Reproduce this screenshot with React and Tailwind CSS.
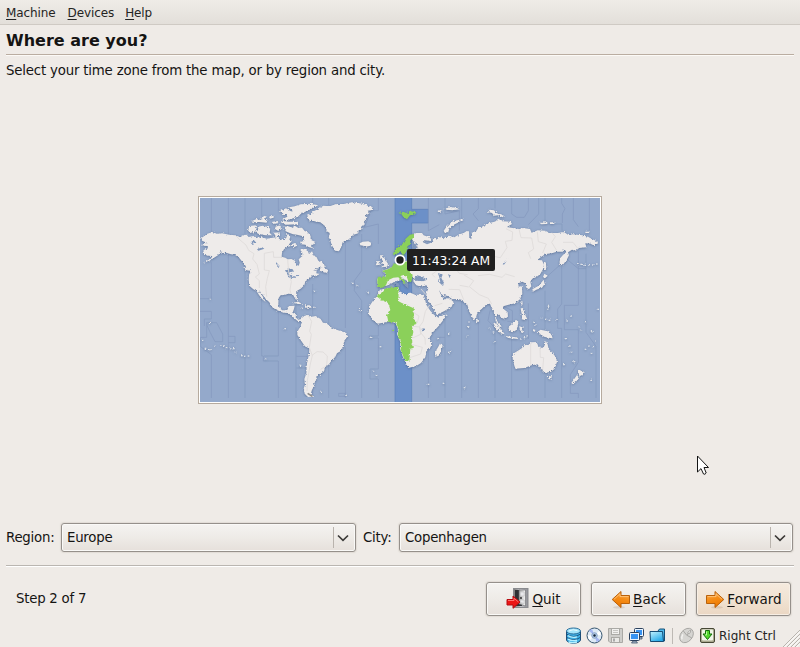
import React from "react";

/* Map units are thirds of a pixel: the 1200x612 view box is drawn at 400x204. */
const LAND = [
  // North America
  "M18 140 L16 132 L28 124 L34 119 L50 114 L62 119 L78 118 L100 122 L118 124 L130 128 L142 123 L152 122 L158 129 L172 126 L185 131 L198 130 L212 134 L230 131 L245 129 L250 135 L262 139 L270 132 L275 124 L283 128 L280 137 L288 140 L280 150 L284 156 L272 160 L264 166 L258 176 L257 188 L268 191 L275 196 L286 195 L297 200 L301 212 L308 215 L311 206 L308 196 L318 187 L319 176 L313 168 L326 165 L336 172 L339 180 L348 172 L354 184 L362 190 L367 200 L378 205 L386 214 L383 221 L369 221 L352 229 L362 230 L361 238 L372 240 L355 248 L352 242 L340 254 L328 262 L325 274 L314 284 L301 292 L300 303 L307 315 L304 323 L297 313 L290 301 L277 299 L266 303 L254 304 L248 312 L247 331 L252 344 L262 350 L275 345 L281 336 L296 335 L293 348 L289 356 L300 361 L299 370 L307 377 L318 374 L319 381 L305 381 L294 372 L287 364 L275 357 L262 356 L240 347 L227 338 L220 325 L207 313 L198 300 L188 287 L201 309 L209 324 L198 315 L189 303 L181 290 L172 286 L160 275 L158 260 L159 242 L164 232 L151 225 L149 216 L140 205 L128 190 L116 182 L105 181 L90 176 L77 177 L75 170 L66 184 L52 193 L38 202 L20 206 L45 194 L49 186 L34 185 L20 178 L23 168 L36 163 L34 156 L19 155 L22 147 L35 148 Z",
  // Arctic islands
  "M160 96 L179 94 L182 104 L176 113 L162 117 L156 109 Z",
  "M185 99 L198 95 L214 98 L223 104 L221 116 L228 124 L208 124 L188 120 L176 113 L187 109 Z",
  "M166 82 L183 74 L187 78 L205 74 L216 81 L211 86 L190 84 L177 85 Z",
  "M193 72 L207 65 L210 71 L200 75 Z M219 68 L233 65 L233 71 L222 74 Z M229 83 L247 81 L246 88 L228 90 Z M252 51 L270 43 L287 53 L275 61 L262 63 Z",
  "M254 85 L258 80 L278 83 L306 83 L306 91 L270 92 Z M258 76 L274 68 L270 58 L290 51 L279 40 L296 37 L314 31 L345 29 L367 34 L346 43 L336 52 L317 57 L306 68 L287 74 L273 79 Z",
  "M264 98 L281 97 L291 102 L294 94 L306 101 L318 101 L326 111 L335 115 L344 126 L344 137 L359 144 L356 150 L345 153 L351 163 L337 159 L328 152 L315 151 L312 143 L325 141 L321 127 L303 122 L291 121 L281 117 L269 112 Z",
  "M238 98 L252 94 L255 103 L247 111 L238 106 Z M233 116 L251 115 L252 123 L240 128 Z M270 120 L279 123 L272 128 Z M284 152 L298 146 L303 155 L294 160 Z",
  "M374 222 L389 215 L388 223 L397 229 L393 237 L381 233 L371 232 Z M140 217 L152 223 L160 231 L148 227 Z",
  // Caribbean
  "M290 326 L307 323 L324 333 L309 331 Z M326 334 L341 334 L347 341 L330 341 Z M314 341 h7 v3 h-7 Z M351 338 h5 v3 h-5 Z M40 314 h5 v3 h-5 Z",
  // Greenland
  "M331 66 L345 60 L350 53 L362 47 L382 35 L401 37 L420 30 L443 30 L468 25 L501 29 L516 35 L532 41 L526 49 L515 50 L521 57 L508 66 L513 74 L503 83 L507 91 L496 97 L500 104 L488 109 L487 118 L471 123 L465 132 L450 139 L440 145 L436 158 L429 172 L417 170 L407 153 L403 139 L398 130 L401 117 L391 111 L393 101 L384 94 L373 85 L353 82 L339 79 Z",
  // Iceland, British isles
  "M491 148 L500 143 L517 142 L528 148 L523 155 L510 158 L501 155 L493 154 Z",
  "M552 184 L562 184 L560 190 L567 194 L573 205 L577 211 L573 218 L555 220 L564 212 L557 207 L561 201 L553 193 Z M544 201 L553 202 L550 213 L539 214 Z",
  // Eurasia
  "M643 128 L660 117 L678 117 L683 124 L706 132 L705 141 L685 139 L680 144 L693 151 L703 147 L712 142 L708 135 L716 132 L725 137 L726 129 L748 132 L758 125 L775 130 L790 121 L803 117 L812 111 L819 112 L820 131 L826 135 L827 119 L832 112 L839 114 L848 99 L858 98 L877 88 L895 83 L912 76 L922 82 L944 83 L948 90 L933 99 L950 102 L970 105 L981 102 L1002 105 L1007 116 L1025 109 L1048 110 L1062 117 L1085 117 L1104 114 L1117 123 L1130 121 L1160 124 L1176 128 L1188 135 L1206 143 L1204 152 L1191 153 L1183 149 L1168 148 L1171 160 L1149 162 L1140 170 L1128 167 L1116 175 L1119 184 L1113 196 L1103 210 L1095 216 L1090 206 L1093 192 L1100 184 L1112 173 L1104 166 L1098 173 L1082 173 L1068 178 L1049 180 L1034 190 L1024 198 L1038 199 L1044 212 L1041 226 L1033 240 L1022 249 L1009 254 L1003 263 L1006 277 L999 286 L991 281 L988 268 L979 263 L967 268 L968 278 L978 277 L979 300 L972 316 L958 328 L938 332 L922 337 L923 345 L935 355 L936 368 L922 374 L914 369 L904 360 L900 370 L904 382 L913 391 L917 400 L909 397 L899 382 L896 360 L888 345 L882 329 L872 331 L851 350 L843 360 L840 371 L832 376 L821 355 L813 330 L805 327 L799 318 L785 315 L769 316 L755 306 L738 302 L728 287 L737 306 L744 317 L759 311 L773 324 L767 338 L744 352 L722 362 L716 350 L703 331 L693 314 L690 302 L697 282 L691 274 L675 278 L661 274 L651 260 L655 250 L642 247 L637 264 L628 257 L604 260 L572 275 L545 279 L543 256 L548 250 L569 248 L566 238 L558 231 L590 220 L606 208 L632 200 L651 185 L653 172 L661 162 L658 150 Z",
  "M743 110 L753 96 L770 82 L797 76 L802 79 L776 91 L760 104 L757 114 L746 116 Z",
  "M876 54 L881 47 L894 49 L901 57 L910 60 L924 65 L920 70 L906 64 L895 65 L888 57 Z M1030 86 h12 v-5 l12 4 v5 l-18 1 Z M1062 85 h13 v5 h-13 Z M1168 113 h12 v4 h-12 Z M724 51 l11 -3 l5 3 l-12 4 Z M745 44 l19 -5 l17 2 l10 5 l-20 3 l-13 -1 Z",
  "M1044 200 L1050 207 L1051 224 L1047 232 L1043 218 Z M1045 239 L1055 245 L1047 253 L1041 249 Z M1043 257 L1046 270 L1038 281 L1021 287 L1011 293 L1009 286 L1025 277 L1033 269 Z M973 324 l6 -3 l1 10 l-4 5 Z M840 372 l6 5 l-1 8 l-5 -2 Z",
  // Africa
  "M552 287 L568 284 L581 283 L607 278 L611 292 L632 304 L640 295 L657 302 L680 302 L686 311 L691 332 L703 350 L714 362 L723 370 L748 362 L742 378 L730 394 L715 410 L706 420 L700 434 L707 446 L704 460 L692 470 L688 490 L675 507 L661 516 L637 522 L630 508 L621 490 L612 464 L613 444 L603 421 L606 406 L599 388 L582 382 L562 386 L545 389 L530 377 L518 360 L519 338 L532 319 L541 309 Z",
  "M733 446 L740 454 L737 468 L728 485 L719 489 L717 474 L726 460 Z",
  // South America
  "M318 371 L326 365 L336 363 L343 369 L359 366 L374 375 L381 386 L392 388 L402 398 L417 406 L434 411 L451 417 L455 427 L445 440 L441 457 L434 471 L423 478 L418 488 L403 505 L399 511 L388 519 L384 532 L369 544 L360 548 L364 556 L354 565 L356 574 L348 587 L345 597 L352 608 L336 609 L326 599 L323 583 L327 572 L325 555 L331 538 L332 512 L339 480 L340 464 L326 456 L316 441 L304 423 L304 413 L311 401 L317 390 Z",
  // Oceania
  "M951 479 L968 469 L977 463 L984 454 L999 452 L1005 445 L1023 444 L1026 455 L1038 463 L1045 456 L1049 440 L1055 451 L1058 466 L1068 475 L1081 491 L1083 504 L1076 524 L1065 533 L1047 537 L1031 520 L1024 511 L1007 514 L985 522 L958 524 L955 515 L950 494 Z",
  "M1055 546 L1068 547 L1064 557 L1057 554 Z M1149 525 L1158 533 L1166 534 L1160 544 L1151 550 L1148 538 Z M1143 543 L1150 551 L1140 563 L1131 571 L1126 567 L1136 553 Z",
  "M891 384 L903 391 L917 407 L926 421 L913 418 L899 403 Z M925 425 L944 428 L963 430 L966 435 L937 432 Z M937 399 L948 390 L960 377 L968 384 L962 407 L951 415 L939 411 Z M970 398 l14 -1 l-7 6 l5 13 l-5 1 l-5 -9 Z M1023 414 L1034 407 L1055 412 L1066 421 L1070 433 L1056 431 L1044 428 L1032 419 Z M1010 405 l9 3 l-5 6 Z M974 343 l7 -1 l4 15 l7 14 l-4 8 l-11 -3 l1 -9 Z M1040 416 h8 v5 h-8 Z",
];
const WATER = [
  // inland lakes and seas
  "M267 229 L277 223 L290 226 L294 233 L281 234 L276 247 L285 239 L290 247 L303 247 L310 243 L305 241 L295 252 L279 251 L273 239 Z",
  "M164 145 L174 139 L181 146 L167 150 Z M183 166 L199 160 L205 164 L187 170 Z M240 204 L251 216 L248 219 L241 211 Z",
  "M652 261 L661 243 L679 248 L694 257 L681 262 L664 260 Z M726 237 L740 242 L736 252 L744 266 L741 276 L729 265 L731 254 Z M756 240 L765 245 L761 252 Z",
  "M651 157 L661 147 L666 161 L658 169 L672 173 L675 180 L658 181 L655 194 L634 201 L641 188 Z",
  "M590 266 L604 261 L613 278 L600 276 Z M613 257 L625 265 L617 249 L629 260 L637 268 L637 284 L628 276 Z",
  "M934 197 L938 190 L926 210 L919 214 Z M677 404 l9 -1 l-2 8 l-6 1 Z",
];
const GREEN = [
  "M591 180 L596 167 L608 158 L620 149 L629 134 L642 122 L652 120 L653 131 L643 139 L642 149 L634 158 L632 170 L627 180 L617 184 L614 171 L602 180 L594 184 Z",
  "M544 279 L544 255 L547 248 L569 249 L569 239 L558 231 L575 226 L588 220 L593 209 L603 208 L606 195 L616 206 L635 202 L648 206 L649 225 L640 234 L650 242 L647 260 L638 264 L632 248 L619 244 L613 247 L624 258 L629 271 L619 263 L607 250 L592 251 L576 259 L570 274 L559 281 Z",
  "M607 278 L608 322 L616 326 L653 343 L654 366 L650 371 L664 386 L648 397 L652 414 L647 435 L650 443 L646 451 L654 461 L643 464 L640 501 L627 501 L614 467 L615 443 L605 422 L608 407 L600 385 L577 383 L573 364 L583 348 L577 327 L557 319 L541 306 L558 298 L568 284 L590 280 Z",
  "M607 57 L622 53 L632 58 L642 50 L661 55 L651 62 L642 64 L633 76 L622 69 L616 60 Z M589 407 h5 v4 h-5 Z",
];
const BORDERS =
  "M118 124 L132 138 L150 153 L158 169 L174 179 L170 195 L183 211 L190 240 L178 249 L190 260 L190 282 M259 190 L233 190 L232 173 L205 178 L205 228 L220 230 L214 253 L209 278 L212 308 M275 196 L278 235 L286 263 L282 287 L285 300 M337 366 L347 382 L341 412 L346 421 L340 461 L349 485 L343 510 L334 560 L333 591 M347 485 L363 473 L381 474 L394 486 L392 515 L374 526 M701 333 L688 352 L681 383 L671 397 L675 417 L687 432 L688 452 M651 397 L671 399 L674 421 L650 432 M652 355 L669 366 L664 386 M646 451 L679 460 L674 480 L641 491 M660 152 L683 185 L678 211 L690 229 M708 184 L733 200 L730 219 L756 225 L771 214 L790 238 L815 242 M930 104 L950 114 L948 139 L928 142 L933 161 L913 191 L892 187 L872 203 M969 105 L975 131 L1007 132 L1013 165 L997 176 L1004 194 M1024 113 L1027 143 L1051 150 L1040 177 M1068 116 L1078 128 L1067 145 L1081 168 M1101 145 L1131 145 L1146 164 M804 243 L833 260 L820 278 L850 302 L877 313 L887 330 M846 245 L880 241 L918 250 L929 240 L956 248 M791 274 L818 279 M758 286 L791 287 L803 317 M1004 449 L1004 512 M1032 462 L1033 490 L1043 491 L1040 528 M722 231 L708 241 L717 250 M675 285 L690 302 M716 335 L739 328";
const SEAZONES =
  "M46 12 V136 M46 205 V314 H12 M12 352 H46 V375 H25 V396 M97 12 V123 M97 180 V612 M147 12 V122 M147 225 V612 M197 12 V66 M197 312 V486 H202 V501 H247 V612 M247 12 V50 M247 350 V486 H204 M300 318 V372 M300 400 V612 M350 12 V28 M350 270 V362 M350 590 V612 M398 12 V33 M398 225 V390 M398 515 V612 M32 386 H62 L80 420 V443 H57 L43 416 L33 395 Z M32 386 V430 H14 V458 L46 482 V612 M97 427 H117 V446 H97 M301 487 H334 M301 522 H331 M448 142 V402 M448 460 V612 M497 120 V230 L475 260 V290 L497 320 V612 M547 12 V50 H525 L505 100 L547 90 V150 M547 280 V426 H520 V432 H547 V525 H522 V555 H547 V612 M428 598 H448 V607 H428 Z M697 12 V110 L730 92 M747 12 V60 L790 50 V110 M697 360 V612 M747 362 V612 M728 430 H747 M797 12 V74 M797 320 V612 M847 12 V44 L831 60 L847 80 M847 365 V612 M897 12 V43 M897 400 V612 M947 12 V60 L962 70 H985 L997 50 V12 M947 435 V612 M997 92 L1028 60 V12 M997 328 V435 M997 520 V612 M1047 12 V90 H1098 V110 M1047 290 V410 M1047 545 V612 M1097 12 V28 L1107 44 L1099 60 V87 M1097 218 V330 L1085 345 V403 H1097 V612 M1132 12 V77 L1147 98 M1147 172 V334 H1105 V407 H1147 V505 L1123 542 V598 H1147 V612 M1180 12 V110 M1170 179 V415 L1200 457 V612 M1056 245 L1112 195 L1147 224 H1170 M882 350 L876 380 L904 410 M918 335 L949 350 V382 H934";
const DOTS = [
  [42, 388], [19, 439], [28, 463], [57, 457], [41, 467], [75, 453], [83, 455], [91, 461], [101, 463], [106, 466], [113, 464], [118, 474], [137, 485], [146, 487], [157, 486], [208, 495], [267, 404], [313, 514], [375, 592], [355, 292],
  [470, 268], [484, 273], [516, 295], [489, 347], [492, 350], [523, 430], [553, 458], [532, 531], [541, 544], [450, 604], [697, 571], [742, 568], [726, 434], [759, 475], [764, 472], [757, 418], [751, 364], [805, 581], [893, 443],
  [1145, 209], [1155, 211], [1167, 214], [1179, 212], [1190, 213], [1202, 210], [1057, 337], [1056, 346], [1036, 372], [1049, 376], [1060, 379], [1080, 378], [1113, 381], [1125, 367], [1014, 385], [1016, 393], [1150, 398], [1156, 407], [1168, 383], [1185, 410], [1191, 414], [1200, 441], [1168, 466], [1178, 456], [1190, 458], [1186, 478], [1121, 456], [1126, 474], [1134, 503], [1108, 434], [1103, 512], [1185, 559], [1206, 346], [818, 384], [817, 398], [814, 427], [880, 403], [892, 414], [993, 426], [985, 431], [974, 435],
];

function WorldMap() {
  return (
    <svg className="block h-[204px] w-[400px]" viewBox="12 12 1200 612">
      <defs>
        <filter id="coast" x="0" y="0" width="100%" height="100%" colorInterpolationFilters="sRGB">
          <feTurbulence type="fractalNoise" baseFrequency="0.2" numOctaves="2" seed="4" result="n" />
          <feDisplacementMap in="SourceGraphic" in2="n" scale="9" xChannelSelector="R" yChannelSelector="G" result="d" />
          <feDropShadow in="d" dx="0" dy="2" stdDeviation="2.8" floodColor="#3e5479" floodOpacity="0.6" />
        </filter>
      </defs>
      <rect x="12" y="12" width="1200" height="612" fill="#94a9cb" />
      <path d="M597 12 H647 V46 H697 V87 H647 V624 H597 Z" fill="#6c90c8" />
      <path d="M597 12 V624 M647 12 V46 H697 V87 H647 V624" fill="none" stroke="#597fb8" strokeWidth="2" />
      <path d={SEAZONES} fill="none" stroke="#859abf" strokeWidth="2.5" />
      <g filter="url(#coast)">
        <rect x="12" y="12" width="1" height="1" fill="#94a9cb" />
        {LAND.map((d) => <path key={d} d={d} fill="#eeebea" />)}
        {DOTS.map(([x, y]) => <rect key={`${x}-${y}`} x={x - 2} y={y - 2} width="5" height="4" fill="#dbe0e7" />)}
        {WATER.map((d) => <path key={d} d={d} fill="#8097bb" />)}
        {GREEN.map((d) => <path key={d} d={d} fill="#8bd05a" />)}
      </g>
      <path d={BORDERS} fill="none" stroke="#dedbda" strokeWidth="2.5" />
      <path d="M335 598 L349 607" stroke="#8b8a88" strokeWidth="5" />
    </svg>
  );
}

function Mnemonic({ text }) {
  return (
    <span>
      <span className="underline decoration-1 underline-offset-2">{text[0]}</span>
      {text.slice(1)}
    </span>
  );
}

function Combo({ value, className }) {
  return (
    <div className={`flex h-[29px] items-center rounded-[3px] border border-[#95908b] bg-linear-to-b from-[#f5f3f1] via-[#eeebe7] to-[#e6e0db] pl-[5px] shadow-[inset_0_0_0_1px_#faf9f7,0_0_1px_1px_#e1dcd6] ${className}`}>
      <span className="flex-1">{value}</span>
      <span className="flex h-[21px] w-[22px] items-center border-l border-[#b9b3ad] pl-[3px]">
        <svg width="12" height="8" viewBox="0 0 12 8" fill="none" stroke="#3c3a38" strokeWidth="1.7">
          <path d="M1 1.5 L6 6.3 L11 1.5" />
        </svg>
      </span>
    </div>
  );
}

function Arrow({ flip }) {
  return (
    <svg width="20" height="20" viewBox="0 0 20 20" className={flip ? "-scale-x-100" : ""}>
      <defs>
        <linearGradient id="orange" x2="0.3" y2="1">
          <stop stopColor="#fbb25c" />
          <stop offset="0.55" stopColor="#f58c16" />
          <stop offset="1" stopColor="#ee7900" />
        </linearGradient>
      </defs>
      <ellipse cx="12" cy="18.3" rx="6" ry="1.3" fill="#8b7762" opacity="0.2" />
      <path d="M1.5 6.5 H10 V2.5 L18.8 10.5 L10 18.5 V14.5 H1.5 Z" fill="url(#orange)" stroke="#b9610b" strokeLinejoin="round" />
      <path d="M2.6 7.6 H11 V4.8 L17 10.3" fill="none" stroke="#ffc47c" strokeWidth="0.9" />
    </svg>
  );
}

function QuitIcon() {
  return (
    <svg width="24" height="22" viewBox="0 0 24 22" className="-mt-[2px]">
      <defs>
        <linearGradient id="frame"><stop stopColor="#777" /><stop offset="0.5" stopColor="#c8c8cc" /><stop offset="1" stopColor="#8d8e93" /></linearGradient>
        <linearGradient id="door"><stop stopColor="#aaa" /><stop offset="1" stopColor="#f7f7f7" /></linearGradient>
      </defs>
      <rect x="7.5" y="1.5" width="14.5" height="19" fill="url(#frame)" stroke="#8a8b8e" />
      <rect x="9" y="3" width="7" height="16" fill="#303134" />
      <path d="M13 3 H19.5 V19 L13 17 Z" fill="url(#door)" stroke="#66676a" strokeWidth="0.6" />
      <path d="M14.2 5 H18.2 V9 H14.2 Z M14.2 13 H18.2 V16.5 L14.2 15.5 Z" fill="#e9e9eb" stroke="#b5b5b7" strokeWidth="0.5" />
      <circle cx="15" cy="11" r="0.9" fill="#222" />
      <path d="M1 12.5 H7 V9 L14 15 L7 21.3 V18 H1 Z" fill="#ec1615" stroke="#b60d12" strokeLinejoin="round" />
      <path d="M2 13.5 H8 V11.2 L12.5 15" fill="none" stroke="#ff7571" />
    </svg>
  );
}

function Button({ label, icon, active }) {
  return (
    <div className={`flex h-[34px] w-[95px] items-center justify-center gap-[2px] rounded-[3px] border border-[#95908b] text-[13.5px] tracking-normal ${active ? "bg-linear-to-b from-[#f5eade] via-[#f1e3d3] to-[#ebd7c3] shadow-[inset_0_0_0_1px_#f7eee4,0_0_1px_1px_#e1dcd6]" : "bg-linear-to-b from-[#f5f3f1] via-[#eeebe7] to-[#e6e0db] shadow-[inset_0_0_0_1px_#faf9f7,0_0_1px_1px_#e1dcd6]"}`}>
      {icon}
      <span className="-mt-px"><Mnemonic text={label} /></span>
    </div>
  );
}

function DiskIcon() {
  return (
    <svg width="17" height="17" viewBox="0 0 17 17">
      <path d="M1.5 4 V13 C2.5 17.3 14.5 17.3 15.5 13 V4" fill="#3fb0e6" stroke="#1f4d76" />
      <path d="M1.5 7 Q8.5 12 15.5 7 M1.5 10.3 Q8.5 15.2 15.5 10.3" fill="none" stroke="#1c5480" />
      <path d="M3 8.7 Q7 11.3 12 9.9 M3 12.2 Q7 14.5 12 13.2 M3.5 15 Q8 16.2 12 15" fill="none" stroke="#b4efff" strokeWidth="1.4" />
      <ellipse cx="8.5" cy="4" rx="7" ry="3" fill="#a4e4fa" stroke="#2c6f9b" />
      <path d="M4 4 Q8 1.6 12.5 3.7" fill="none" stroke="#e6fbff" />
    </svg>
  );
}

function DiscIcon() {
  return (
    <svg width="17" height="17" viewBox="0 0 17 17">
      <circle cx="8.5" cy="8.5" r="7.5" fill="#dde9f5" stroke="#37566f" />
      <path d="M8.5 8.5 L3 4 A7 7 0 0 1 6 2 Z M8.5 8.5 L14 13 A7 7 0 0 1 10.5 15 Z" fill="#a5b6f1" />
      <path d="M8.5 8.5 L1.8 8.5 A7 7 0 0 0 4 13 Z M8.5 8.5 L15 8 A7 7 0 0 0 13 4 Z" fill="#fff" />
      <circle cx="8.5" cy="8.5" r="2.8" fill="#b4c9e4" stroke="#7391ba" strokeWidth="0.7" />
      <circle cx="8.5" cy="8.5" r="1.2" fill="#13243a" />
    </svg>
  );
}

function FloppyIcon() {
  return (
    <svg width="17" height="17" viewBox="0 0 17 17" stroke="#aaa9a5">
      <path d="M1.5 1.5 H15.5 V15.5 H3 L1.5 14 Z" fill="#cfcecb" />
      <rect x="4.5" y="1.5" width="8" height="6" fill="#f1f0ee" />
      <path d="M6 3.5 H11 M6 5.5 H11" stroke="#c5c4c1" />
      <rect x="4.5" y="10.5" width="8" height="5" fill="#ebeae7" />
      <rect x="6" y="11.5" width="2" height="3" fill="#aaa" stroke="none" />
    </svg>
  );
}

function NetworkIcon() {
  return (
    <svg width="17" height="17" viewBox="0 0 17 17">
      <rect x="6.5" y="1.5" width="9" height="8" rx="1" fill="#eaf5ff" stroke="#2c415d" />
      <rect x="8" y="3" width="6" height="5" fill="#3793f2" />
      <path d="M10 10 H14 V12 H10" fill="#aebdcc" stroke="#2c415d" strokeWidth="0.7" />
      <rect x="1.5" y="5.5" width="10" height="8" rx="1" fill="#eaf5ff" stroke="#2c415d" />
      <rect x="3" y="7" width="7" height="5" fill="#3793f2" />
      <path d="M5 14 H8 L9.5 16 H3.5 Z" fill="#aebdcc" stroke="#2c415d" strokeWidth="0.7" />
    </svg>
  );
}

function FolderIcon() {
  return (
    <svg width="17" height="17" viewBox="0 0 17 17">
      <defs><linearGradient id="folder" x2="0.6" y2="1"><stop stopColor="#c4f4ff" /><stop offset="1" stopColor="#27aae8" /></linearGradient></defs>
      <path d="M9 4 L10.5 2 H15.5 V14 H3" fill="#4db8ea" stroke="#145078" />
      <path d="M1 4.5 H13.5 L14.5 14.5 H1.5 Z" fill="url(#folder)" stroke="#164c74" strokeLinejoin="round" />
    </svg>
  );
}

function MouseIcon() {
  return (
    <svg width="17" height="17" viewBox="0 0 17 17">
      <g transform="rotate(40 8.5 8.5)" stroke="#a6a5a2" strokeWidth="0.9">
        <ellipse cx="8.5" cy="8.5" rx="5.9" ry="8" fill="#d6d5d2" />
        <path d="M3.1 7 Q8.5 9.3 13.9 7 M8.5 1 V8" fill="none" />
        <path d="M5 10 Q5.5 13 7.5 14.4" fill="none" stroke="#f2f1ef" strokeWidth="1.5" />
        <ellipse cx="8.5" cy="4.3" rx="1" ry="1.7" fill="#f0efed" />
      </g>
    </svg>
  );
}

function HostKeyIcon() {
  return (
    <svg width="17" height="17" viewBox="0 0 17 17">
      <rect x="1.5" y="1.5" width="14" height="14" rx="1.5" fill="#aaa98f" stroke="#474836" />
      <rect x="3" y="2.5" width="11" height="11" rx="1" fill="#f1f6e8" />
      <path d="M6.5 3.5 H10.5 V7 H13 L8.5 12.5 L4 7 H6.5 Z" fill="#52d82e" stroke="#146f0a" />
      <path d="M7.5 4.5 V8 H6.2" stroke="#b9ff9b" fill="none" />
    </svg>
  );
}

export default function App() {
  return (
    <div className="relative flex h-[647px] w-[800px] flex-col overflow-hidden bg-[#efebe7] font-['DejaVu_Sans',sans-serif] text-[13.33px] leading-[20px] tracking-[-0.25px] text-[#151413]">
      <nav className="flex h-[25px] shrink-0 items-center gap-[12px] border-b border-[#cfcac4] bg-linear-to-b from-[#efece7] to-[#e3dfda] pl-[6px] pt-[1px] text-[12px] tracking-[-0.1px] text-[#252423]">
        <Mnemonic text="Machine" />
        <Mnemonic text="Devices" />
        <span className="-ml-px"><Mnemonic text="Help" /></span>
      </nav>
      <header className="mx-[6px] shrink-0">
        <h1 className="h-[30px] border-b border-[#baada1] pt-[6px] text-[16px] font-bold leading-[20px] tracking-normal shadow-[0_1px_0_#fcfaf7]">Where are you?</h1>
        <p className="-mb-px pt-[6px] tracking-[-0.19px]">Select your time zone from the map, or by region and city.</p>
      </header>
      <main className="flex h-[443px] shrink-0 justify-center pt-[116px]">
        <div className="relative h-[208px] w-[404px] border border-[#b6aa9e] bg-white p-[1px]">
          <WorldMap />
          <svg className="absolute left-[195px] top-[57px]" width="12" height="12" viewBox="0 0 12 12">
            <circle cx="6" cy="6" r="4.6" fill="#202020" stroke="white" strokeWidth="1.8" />
          </svg>
          <div className="absolute left-[208px] top-[52px] h-[22px] w-[88px] whitespace-nowrap rounded-[2px] bg-[#202020] text-center text-[12.3px] leading-[24px] tracking-normal text-white">11:43:24 AM</div>
        </div>
      </main>
      <section className="flex h-[29px] shrink-0 items-center pl-[6px]">
        <span className="w-[55px]">Region:</span>
        <Combo value="Europe" className="w-[295px]" />
        <span className="ml-[7px] w-[36px]">City:</span>
        <Combo value="Copenhagen" className="w-[394px]" />
      </section>
      <hr className="mx-[6px] mt-[13px] h-[2px] shrink-0 border-b border-t border-b-white border-t-[#bab6b1]" />
      <footer className="mt-[15px] flex h-[34px] shrink-0 items-center pl-[16px] pr-[9px]">
        <span className="flex-1">Step 2 of 7</span>
        <div className="flex gap-[10px]">
          <Button label="Quit" icon={<QuitIcon />} />
          <Button label="Back" icon={<Arrow flip />} />
          <Button label="Forward" active icon={<Arrow />} />
        </div>
      </footer>
      <div className="mt-[10px] flex h-[19px] shrink-0 items-center pl-[565px] text-[12px] tracking-normal text-[#252423]">
        <div className="flex gap-[4px]">
          <DiskIcon /><DiscIcon /><FloppyIcon /><NetworkIcon /><FolderIcon />
        </div>
        <div className="ml-[6px] mr-[5px] h-[16px] w-px bg-[#bdb9b4]" />
        <MouseIcon />
        <span className="ml-[4px]"><HostKeyIcon /></span>
        <span className="ml-[3px] whitespace-nowrap">Right Ctrl</span>
      </div>
      <svg className="absolute bottom-0 right-0" width="17" height="17" viewBox="0 0 17 17" stroke="#b8b3ad">
        <path d="M0 17 L17 0 M4 17 L17 4 M8 17 L17 8 M12 17 L17 12" />
        <path d="M1.5 17 L17 1.5 M5.5 17 L17 5.5 M9.5 17 L17 9.5 M13.5 17 L17 13.5" stroke="#fff" />
      </svg>
      <svg className="absolute left-[696px] top-[455px]" width="15" height="21" viewBox="0 0 15 21">
        <path d="M1.5 1 V17 L5 13.6 L7.5 19 Q9 20 10.2 18 L8 12.5 H12.5 Z" fill="white" stroke="#151515" strokeLinejoin="round" />
      </svg>
    </div>
  );
}
